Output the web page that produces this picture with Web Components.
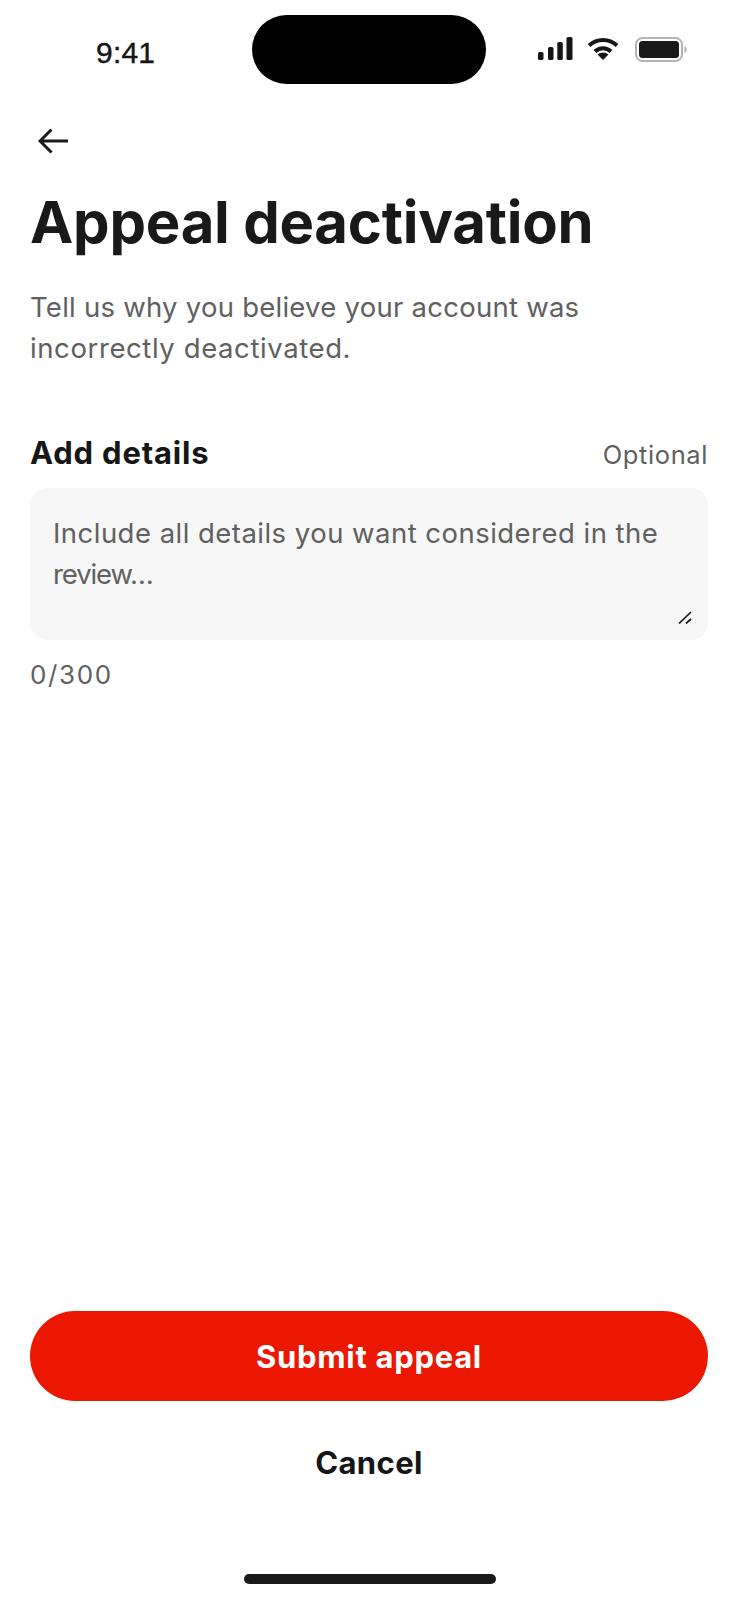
<!DOCTYPE html>
<html lang="en"><head><meta charset="utf-8"><title>Appeal deactivation</title>
<style>html,body{margin:0;padding:0;background:#fff}</style></head>
<body>
<appeal-screen></appeal-screen>
<script>
function def(name, html){
  customElements.define(name, class extends HTMLElement{
    constructor(){super();this.attachShadow({mode:'open'}).innerHTML=html;}
  });
}
def('status-bar',`<style>
:host{display:flex;align-items:flex-start;height:100px;position:relative;font-family:"Liberation Sans",sans-serif}
.time{position:absolute;left:96px;top:36px;font-size:30px;line-height:34px;color:#161616;-webkit-text-stroke:.4px #161616;letter-spacing:.2px}
.island{position:absolute;left:252px;top:15px;width:234px;height:69px;border-radius:35px;background:#000}
.icons{position:absolute;left:538px;top:37px;display:flex;gap:14px;align-items:flex-start}
.bat{margin-left:2px}
svg{display:block}
</style>
<span class="time">9:41</span><div class="island"></div>
<div class="icons">
<svg width="35" height="23" viewBox="0 0 35 23"><g fill="#161616"><rect x="0" y="15" width="5.500" height="8" rx="1.6"/><rect x="10" y="10" width="5.500" height="13" rx="1.6"/><rect x="19.300" y="5" width="5.500" height="18" rx="1.6"/><rect x="28.500" y="0" width="6" height="23" rx="1.6"/></g></svg>
<svg width="32" height="23" viewBox="0 0 32 23"><g fill="none" stroke="#161616" stroke-width="4"><path d="M2 8.500C10 1 22 1 30 8.500"/><path d="M8 14.500C12.500 10 19.500 10 24 14.500"/></g><path d="M16 23L10.500 17.500C13.500 14.800 18.500 14.800 21.500 17.500Z" fill="#161616"/></svg>
<svg class="bat" width="52" height="25" viewBox="0 0 52 25"><rect x="1" y="1" width="46" height="23" rx="6.500" fill="none" stroke="#b3b3b3" stroke-width="2"/><rect x="4" y="4" width="40" height="17" rx="3.500" fill="#1a1a1a"/><path d="M49.500 9C51 9.500 51.700 10.800 51.700 12.500S51 15.500 49.500 16Z" fill="#b3b3b3"/></svg>
</div>`);
def('back-button',`<style>:host{display:block;height:26px;padding-left:38px}svg{display:block}</style>
<svg width="32" height="26" viewBox="0 0 32 26"><path d="M30 13H2M13.500 1.500L2 13l11.500 11.500" fill="none" stroke="#191919" stroke-width="3"/></svg>`);
def('page-head',`<style>:host{display:block;padding:0 30px;font-family:Inter,sans-serif}
h1{margin:0;font-size:58px;line-height:70px;font-weight:700;color:#191919;letter-spacing:-.22px}
p{margin:30px 0 0;font-size:27.5px;line-height:41px;color:#606060;letter-spacing:.25px}
::slotted(.l2){letter-spacing:.6px}</style>
<h1><slot name="title"></slot></h1><p><slot name="sub"></slot><br><slot name="sub2"></slot></p>`);
def('detail-field',`<style>:host{display:block;padding:0 30px;font-family:Inter,sans-serif}
.top{display:flex;justify-content:space-between;align-items:baseline;height:54px}
.lab{font-size:31px;font-weight:700;color:#161616;letter-spacing:.8px}
.opt{font-size:25.5px;color:#606060;letter-spacing:.6px}
.box{position:relative;box-sizing:border-box;height:152px;border-radius:17px;background:#f7f7f7;padding:24.5px 22px 0 23px;font-size:27.5px;line-height:41px;color:#606060;letter-spacing:.47px}
.tight{letter-spacing:-1.1px}
.grip{position:absolute;right:16px;bottom:16px;display:block}
.count{margin-top:19px;font-size:26px;line-height:32px;color:#606060;letter-spacing:1.6px}</style>
<div class="top"><span class="lab">Add details</span><span class="opt">Optional</span></div>
<div class="box">Include all details you want considered in the<br><span class="tight">review…</span>
<svg class="grip" width="14" height="13" viewBox="0 0 14 13"><path d="M1 12.500L13 1M8 12.500L13 8" stroke="#191919" stroke-width="1.700" fill="none"/></svg></div>
<div class="count">0/300</div>`);
def('action-bar',`<style>:host{display:block;padding:0 30px 16px;font-family:Inter,sans-serif;font-weight:700}
.sub{display:flex;align-items:center;justify-content:center;height:90px;border-radius:45px;background:#eb1700;color:#fff;font-size:31px;letter-spacing:.7px}
.can{display:flex;align-items:center;justify-content:center;height:34px;margin-top:44px;font-size:31px;color:#161616;letter-spacing:.4px}
.home{width:252px;height:10px;border-radius:5px;background:#191919;margin:95px 0 0 214px}</style>
<div class="sub">Submit appeal</div><div class="can">Cancel</div><div class="home"></div>`);
def('appeal-screen',`<style>:host{display:flex;flex-direction:column;width:738px;height:1600px;background:#fff;overflow:hidden}
.fill{flex:1}
back-button{margin-top:28px}
page-head{margin-top:33px}
detail-field{margin-top:65px}</style>
<status-bar></status-bar><back-button></back-button>
<page-head><span slot="title">Appeal deactivation</span><span slot="sub">Tell us why you believe your account was</span><span slot="sub2" class="l2">incorrectly deactivated.</span></page-head>
<detail-field></detail-field><div class="fill"></div><action-bar></action-bar>`);
</script>
</body></html>
